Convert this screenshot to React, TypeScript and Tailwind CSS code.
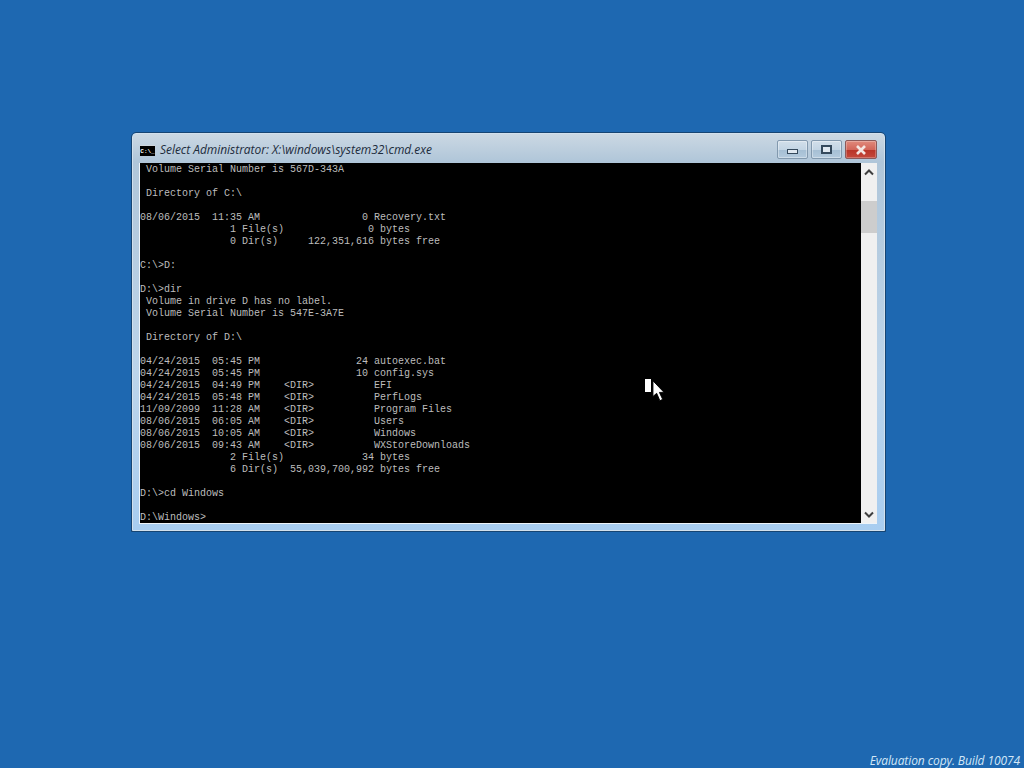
const lines = [
  " Volume Serial Number is 567D-343A",
  "",
  " Directory of C:\\",
  "",
  "08/06/2015  11:35 AM                 0 Recovery.txt",
  "               1 File(s)              0 bytes",
  "               0 Dir(s)     122,351,616 bytes free",
  "",
  "C:\\>D:",
  "",
  "D:\\>dir",
  " Volume in drive D has no label.",
  " Volume Serial Number is 547E-3A7E",
  "",
  " Directory of D:\\",
  "",
  "04/24/2015  05:45 PM                24 autoexec.bat",
  "04/24/2015  05:45 PM                10 config.sys",
  "04/24/2015  04:49 PM    <DIR>          EFI",
  "04/24/2015  05:48 PM    <DIR>          PerfLogs",
  "11/09/2099  11:28 AM    <DIR>          Program Files",
  "08/06/2015  06:05 AM    <DIR>          Users",
  "08/06/2015  10:05 AM    <DIR>          Windows",
  "08/06/2015  09:43 AM    <DIR>          WXStoreDownloads",
  "               2 File(s)             34 bytes",
  "               6 Dir(s)  55,039,700,992 bytes free",
  "",
  "D:\\>cd Windows",
  "",
  "D:\\Windows>",
];

function Chevron({ up }: { up?: boolean }) {
  return (
    <svg width="10" height="8" viewBox="0 0 10 8" fill="none">
      <path d={up ? "M1 6.5 5 2.5 9 6.5" : "M1 1.5 5 5.5 9 1.5"} stroke="#3f3f3f" strokeWidth="2" />
    </svg>
  );
}

export default function App() {
  return (
    <div className="relative flex h-[768px] w-[1024px] flex-col overflow-hidden bg-[#1e68b1] pl-[131px] pt-[132px]">
      <div className="h-[400px] w-[755px] rounded-t-[5px] border border-[#164573]">
        <div className="flex h-full flex-col rounded-t-[4px] border border-[#d2e0ec] bg-[linear-gradient(#cbd8e3,#b0c6d9_7%,#bcd4ea_60%,#a8cdf0)]">
          <div className="flex h-[29px] pl-[7px] pr-[7px]">
            <div className="mt-[11px] flex h-[11px] w-[15px] items-center justify-center overflow-hidden border-t border-[#cfd6dc] bg-black pt-px">
              <span className="font-['Liberation_Mono',monospace] text-[6px] font-bold leading-none text-white">C:\_</span>
            </div>
            <span className="ml-[5px] mt-[9px] font-['Open_Sans',sans-serif] text-[12px] italic leading-[14px] tracking-[-0.04px] text-[#1d2c3c]">
              Select Administrator: X:\windows\system32\cmd.exe
            </span>
            <div className="ml-auto mt-[6px] flex h-[19px] gap-[3px]">
              <div className="flex h-[19px] w-[31px] items-center justify-center rounded-[2px] border border-[#8299ae] bg-[linear-gradient(#d2dfea_0%,#c3d5e4_50%,#a6bfd4_55%,#b3cadd_100%)] shadow-[inset_0_0_0_1px_rgba(255,255,255,0.35)]">
                <div className="mt-[3px] h-[5px] w-[11px] border border-[#34495c] bg-[#dfe8f0]" />
              </div>
              <div className="flex h-[19px] w-[31px] items-center justify-center rounded-[2px] border border-[#8299ae] bg-[linear-gradient(#d2dfea_0%,#c3d5e4_50%,#a6bfd4_55%,#b3cadd_100%)] shadow-[inset_0_0_0_1px_rgba(255,255,255,0.35)]">
                <div className="h-[9px] w-[11px] border-2 border-[#34495c] bg-[#dfe8f0]" />
              </div>
              <div className="flex h-[19px] w-[32px] items-center justify-center rounded-[2px] border border-[#8b5a5a] bg-[linear-gradient(#e08a7c_0%,#d2665a_50%,#b93528_55%,#c4493c_100%)] shadow-[inset_0_0_0_1px_rgba(255,255,255,0.25)]">
                <svg width="12" height="10" viewBox="0 0 12 10" fill="none">
                  <path d="M2 1 10 9M10 1 2 9" stroke="#f4e6e2" strokeWidth="2.6" />
                </svg>
              </div>
            </div>
          </div>
          <div className="ml-[6px] flex w-[738px] border-b border-l border-[#eef4f9]">
            <pre className="h-[360px] w-[721px] overflow-hidden bg-black pt-px font-['Liberation_Mono',monospace] text-[10px] leading-[12px] text-[#bdbdbd]">
              {lines.join("\n")}
            </pre>
            <div className="flex h-[360px] w-[16px] flex-col items-center bg-[#f0f0f0]">
              <div className="flex h-[18px] items-center justify-center">
                <Chevron up />
              </div>
              <div className="mt-[20px] h-[32px] w-full bg-[#cdcdcd]" />
              <div className="mt-auto flex h-[16px] items-center justify-center">
                <Chevron />
              </div>
            </div>
          </div>
        </div>
      </div>
      <div className="mt-auto self-end pr-[4px] font-['Open_Sans',sans-serif] text-[12px] italic leading-[15px] tracking-[-0.1px] text-[#d3e7f7]">
        Evaluation copy. Build 10074
      </div>

      <div className="absolute left-[645px] top-[379px] h-[13px] w-[6px] bg-white" />
      <svg className="absolute left-[652px] top-[379px]" width="13" height="24" viewBox="0 0 14 24">
        <path d="M1 1V18L5 14.5 8.5 22.5 11.5 21 8 13.5H13Z" fill="#fff" stroke="#000" strokeWidth="1" />
      </svg>
    </div>
  );
}
